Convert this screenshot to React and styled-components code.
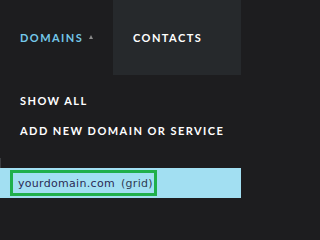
import React from "react";
import styled, { createGlobalStyle } from "styled-components";

const Global = createGlobalStyle`
  html, body { margin: 0; padding: 0; background: #1d1d1f; }
  body { font-family: "Lato", "DejaVu Sans", sans-serif; }
`;

const Page = styled.div`
  width: 241px;
  height: 201px;
  overflow: hidden;
  background: #1d1d1f;
  display: flex;
  flex-direction: column;
`;

const NavBar = styled.nav`
  display: flex;
  height: 75px;
  flex-shrink: 0;
`;

const NavTab = styled.div`
  display: flex;
  align-items: center;
  gap: 6px;
  padding-left: 20px;
  box-sizing: border-box;
  width: ${(p) => (p.$active ? "113px" : "auto")};
  flex: ${(p) => (p.$active ? "0 0 auto" : "1")};
  background: ${(p) => (p.$active ? "#1d1d1f" : "#26292c")};
  color: ${(p) => (p.$active ? "#74c8ea" : "#ffffff")};
  font-family: "Lato", sans-serif;
  font-weight: 700;
  font-size: 11px;
  letter-spacing: 1.45px;
  white-space: nowrap;
`;

const Caret = styled.span`
  width: 0;
  height: 0;
  border-left: 2.5px solid transparent;
  border-right: 2.5px solid transparent;
  border-bottom: 4px solid #8a8a8a;
  margin-top: -1px;
`;

const Dropdown = styled.ul`
  list-style: none;
  margin: 0;
  padding: 10px 0 13px 20px;
  display: flex;
  flex-direction: column;
`;

const MenuItem = styled.li`
  height: 30px;
  display: flex;
  align-items: center;
  color: #ffffff;
  font-family: "Lato", sans-serif;
  font-weight: 700;
  font-size: 11px;
  letter-spacing: 1.45px;
  white-space: nowrap;
`;

const Gap = styled.div`
  height: 10px;
  flex-shrink: 0;
  border-left: 1px solid #3a3c3f;
`;

const DomainBar = styled.div`
  height: 30px;
  flex-shrink: 0;
  background: #a2dff2;
  display: flex;
  align-items: center;
  padding-left: 10px;
  box-sizing: border-box;
`;

const DomainChip = styled.div`
  height: 26px;
  width: 147px;
  box-sizing: border-box;
  border: 3px solid #1fb04b;
  display: flex;
  align-items: center;
  padding-left: 5px;
  font-family: "DejaVu Sans", Verdana, sans-serif;
  font-size: 11px;
  letter-spacing: 0.3px;
  color: #2b2a55;
  white-space: nowrap;
`;

const Tag = styled.span`
  margin-left: 6px;
  color: #2f3c52;
`;

export default function App() {
  return (
    <>
      <Global />
      <Page>
        <NavBar>
          <NavTab $active>
            DOMAINS <Caret />
          </NavTab>
          <NavTab>CONTACTS</NavTab>
        </NavBar>
        <Dropdown>
          <MenuItem>SHOW ALL</MenuItem>
          <MenuItem>ADD NEW DOMAIN OR SERVICE</MenuItem>
        </Dropdown>
        <Gap />
        <DomainBar>
          <DomainChip>
            yourdomain.com<Tag>(grid)</Tag>
          </DomainChip>
        </DomainBar>
      </Page>
    </>
  );
}
